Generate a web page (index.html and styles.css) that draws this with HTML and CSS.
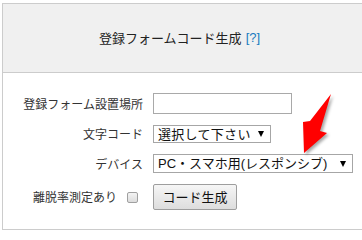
FILE: index.html
```html
<!DOCTYPE html>
<html lang="ja">
<head>
<meta charset="utf-8">
<title>登録フォームコード生成</title>
<link rel="stylesheet" href="styles.css">
</head>
<body>
<div class="panel">
  <div class="panel-head">登録フォームコード生成 <a class="help" href="#">[?]</a></div>
  <div class="panel-body">
    <label class="lbl" for="place">登録フォーム設置場所</label>
    <div class="ctl"><input id="place" class="text" type="text"></div>

    <label class="lbl" for="charset">文字コード</label>
    <div class="ctl"><span class="sel sel-1" id="charset">選択して下さい</span></div>

    <label class="lbl" for="device">デバイス</label>
    <div class="ctl"><span class="sel sel-2" id="device">PC・スマホ用(レスポンシブ)</span></div>

    <label class="lbl" for="bounce">離脱率測定あり<input id="bounce" class="check" type="checkbox"></label>
    <div class="ctl"><button class="btn" type="button">コード生成</button></div>
  </div>
  <svg class="arrow" width="40" height="70" viewBox="0 0 40 70">
    <polygon points="31,4 20,41 27,43 4,63 3,32 10,31" fill="#ff0000"/>
  </svg>
</div>
</body>
</html>
```
FILE: styles.css
```css
html, body {
  margin: 0;
  padding: 0;
  background: #ffffff;
}
body {
  font-family: "Noto Sans CJK JP", "Liberation Sans", sans-serif;
  color: #333333;
}
.panel {
  position: relative;
  margin: 3px 0 0 2px;
  border: 1px solid #cccccc;
  border-right: none;
}
.panel-head {
  height: 68px;
  background: #f0f0f0;
  border-bottom: 1px solid #cccccc;
  display: flex;
  align-items: center;
  padding-left: 96px;
  font-size: 13px;
  line-height: 16px;
  color: #222222;
}
.help {
  color: #1a7bbf;
  text-decoration: none;
  margin-left: 4px;
  font-family: "Liberation Sans", sans-serif;
}
.panel-body {
  display: grid;
  grid-template-columns: 150px auto;
  row-gap: 11px;
  align-items: center;
  padding: 20px 0 19px 0;
}
.lbl {
  font-size: 12px;
  line-height: 14px;
  text-align: right;
  padding-right: 10px;
  color: #333333;
  display: flex;
  justify-content: flex-end;
  align-items: center;
}
.ctl {
  display: flex;
  align-items: center;
}
.text {
  box-sizing: border-box;
  width: 139px;
  height: 21px;
  margin: 0;
  border: 1px solid #a9a9a9;
  padding: 0 3px;
}
.sel {
  box-sizing: border-box;
  display: flex;
  align-items: center;
  position: relative;
  margin: 0;
  border: 1px solid #a6a6a6;
  padding: 0 0 0 4px;
  font-size: 13px;
  line-height: 15px;
  color: #111111;
  background: #ffffff;
  font-family: "Liberation Sans", "Noto Sans CJK JP", sans-serif;
}
.sel::after {
  content: "";
  position: absolute;
  right: 6px;
  top: 50%;
  margin-top: -3px;
  border-left: 3.5px solid transparent;
  border-right: 3.5px solid transparent;
  border-top: 6px solid #000000;
}
.sel-1 {
  width: 118px;
  height: 18px;
  letter-spacing: 0.3px;
}
.sel-2 {
  width: 200px;
  height: 19px;
}
.check {
  -webkit-appearance: none;
  appearance: none;
  box-sizing: border-box;
  width: 11px;
  height: 11px;
  margin: 0 5px 0 10px;
  border: 1px solid #a0a0a0;
  border-radius: 2px;
  background: linear-gradient(#f4f4f4, #dcdcdc);
}
.btn {
  box-sizing: border-box;
  width: 84px;
  height: 26px;
  margin: 0;
  padding: 0;
  border: 1px solid #9e9e9e;
  border-radius: 2px;
  background: linear-gradient(#f6f6f6, #dddddd);
  font-family: "Noto Sans CJK JP", sans-serif;
  font-size: 13px;
  line-height: 16px;
  color: #111111;
}
.arrow {
  position: absolute;
  left: 297px;
  top: 86px;
  filter: drop-shadow(2px 2px 1.5px rgba(0, 0, 0, 0.35));
}
```
